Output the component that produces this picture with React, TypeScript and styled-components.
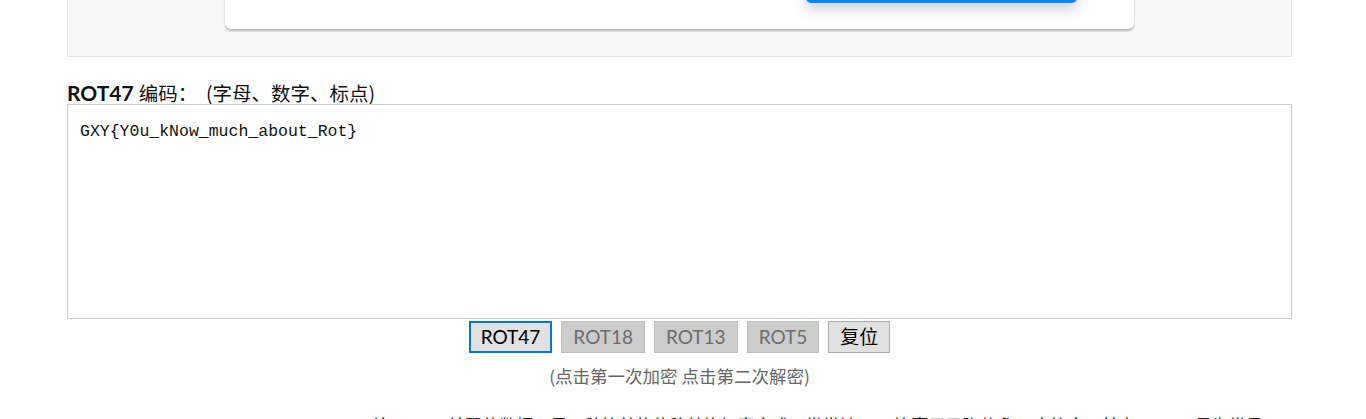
import React from "react";
import styled, { createGlobalStyle } from "styled-components";

const Global = createGlobalStyle`
  html, body { margin: 0; padding: 0; background: #fff; overflow: hidden; }
  body { font-family: Lato, "Noto Sans CJK SC", sans-serif; color: #222; }
`;

const Page = styled.div`
  width: 1366px;
  height: 419px;
  overflow: hidden;
`;

const Column = styled.div`
  width: 1225px;
  margin-left: 67px;
  display: flex;
  flex-direction: column;
`;

const Panel = styled.div`
  margin-top: -200px;
  background: #f7f7f7;
  border: 1px solid #e6e6e6;
  border-top: none;
  padding: 20px 0 27px 157px;
`;

const Card = styled.div`
  width: 909px;
  height: 209px;
  box-sizing: border-box;
  background: #fff;
  border-radius: 6px;
  box-shadow: 0 2px 2px rgba(0, 0, 0, 0.25);
  display: flex;
  justify-content: flex-end;
  align-items: flex-end;
  padding: 0 57px 26px 0;
`;

const PrimaryButton = styled.div`
  width: 271px;
  height: 44px;
  background: #0a84ff;
  border-radius: 5px;
  box-shadow: 0 6px 14px rgba(20, 40, 80, 0.22);
`;

const Label = styled.div`
  margin-top: 24px;
  font-size: 19.5px;
  line-height: 23px;
  color: #111;
  font-family: "Noto Sans CJK SC", sans-serif;
  display: flex;
  align-items: baseline;
  white-space: pre;
`;

const LabelStrong = styled.b`
  font-family: Lato, "Noto Sans CJK SC", sans-serif;
  font-weight: 700;
  font-size: 21px;
  margin-right: 5px;
`;

const TextArea = styled.textarea`
  display: block;
  width: 1225px;
  height: 215px;
  box-sizing: border-box;
  border: 1px solid #cccccc;
  padding: 15px 12px 12px;
  font-family: "Liberation Mono", monospace;
  font-size: 16.5px;
  line-height: 24px;
  color: #111;
  resize: none;
  outline: none;
  margin: 0;
`;

const ButtonRow = styled.div`
  display: flex;
  justify-content: center;
  gap: 9px;
  margin-top: 2px;
`;

const Btn = styled.button<{ $variant: "active" | "disabled" | "normal" }>`
  height: 32px;
  box-sizing: border-box;
  padding: 0 ${(p) => (p.$variant === "active" ? "10px" : "11px")};
  font-family: Lato, "Noto Sans CJK SC", sans-serif;
  font-size: 19px;
  line-height: 28px;
  border-radius: 0;
  cursor: pointer;
  background: ${(p) => (p.$variant === "disabled" ? "#cccccc" : "#e1e1e1")};
  color: ${(p) => (p.$variant === "disabled" ? "#6d6d6d" : "#000")};
  border: ${(p) =>
    p.$variant === "active"
      ? "2px solid #0078d7"
      : p.$variant === "disabled"
      ? "1px solid #bfbfbf"
      : "1px solid #adadad"};
`;

const Note = styled.div`
  text-align: center;
  margin-top: 10px;
  font-family: "Noto Sans CJK SC", sans-serif;
  font-size: 17.5px;
  line-height: 25px;
  color: #666;
`;

const Para = styled.p`
  margin: 22px 0 0 0;
  padding-left: 305px;
  font-family: "Noto Sans CJK SC", sans-serif;
  font-size: 17px;
  line-height: 30px;
  color: #222;
  white-space: nowrap;
`;

export default function App() {
  return (
    <Page>
      <Global />
      <Column>
        <Panel>
          <Card>
            <PrimaryButton />
          </Card>
        </Panel>
        <Label>
          <LabelStrong>ROT47</LabelStrong>编码：  (字母、数字、标点)
        </Label>
        <TextArea defaultValue="GXY{Y0u_kNow_much_about_Rot}" />
        <ButtonRow>
          <Btn $variant="active">ROT47</Btn>
          <Btn $variant="disabled">ROT18</Btn>
          <Btn $variant="disabled">ROT13</Btn>
          <Btn $variant="disabled">ROT5</Btn>
          <Btn $variant="normal">复位</Btn>
        </ButtonRow>
        <Note>(点击第一次加密 点击第二次解密)</Note>
        <Para>
          给 ROT47 编码的数据，是一种简单的位移替换加密方式，常常被 CTF 比赛用于隐藏 flag 字符串，其中 ROT13 最为常见。
        </Para>
      </Column>
    </Page>
  );
}
